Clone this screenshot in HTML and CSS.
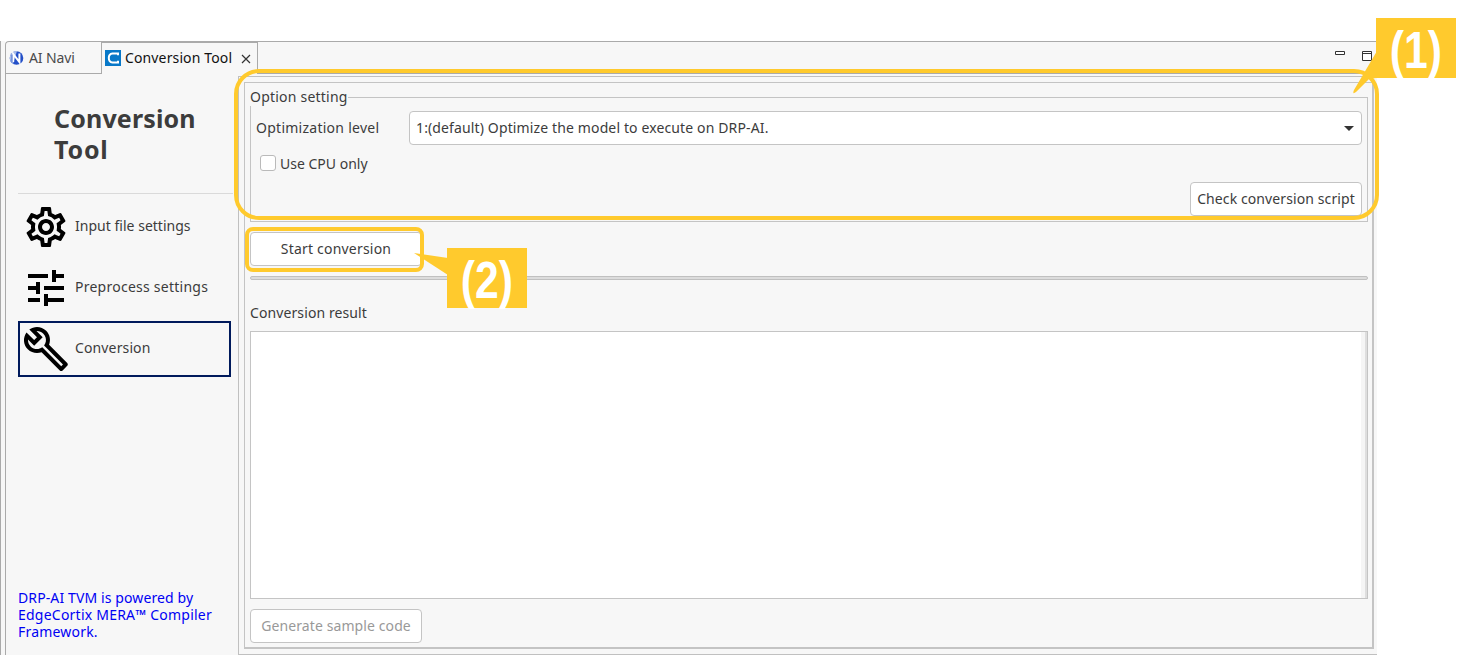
FILE: index.html
```
<!DOCTYPE html>
<html lang="en">
<head>
<meta charset="utf-8">
<title>Conversion Tool</title>
<link rel="stylesheet" href="styles.css">
</head>
<body>
<div class="screen">
  <div class="gutter"></div>
  <div class="window">
    <div class="tabs">
      <div class="tab tab-navi">
        <svg class="tab-icon" width="16" height="16" viewBox="0 0 16 16"><circle cx="7.500" cy="8" r="6.800" fill="#2450c8"/><path d="M1 6a7 7 0 0 1 7-5L4 14Q0 11 1 6z" fill="#a9bdea"/><path d="M4.200 12V4l6.200 8V3.500" fill="none" stroke="#fff" stroke-width="2"/><path d="M3 12.500V4.500" stroke="#2450c8" stroke-width=".8"/></svg>
        <span class="t-navi">AI Navi</span>
      </div>
      <div class="tab tab-active">
        <svg class="tab-icon" width="16" height="16" viewBox="0 0 16 16"><rect width="16" height="16" fill="#0878c8"/><path d="M13 5.200V3.500H7.500Q3.800 4 3.800 8T7.500 12.500H13V10.800" fill="none" stroke="#fff" stroke-width="2"/></svg>
        <span class="t-tool">Conversion Tool</span>
        <svg class="close" width="10" height="10" viewBox="0 0 10 10"><path d="M1 1l8 8M9 1l-8 8" stroke="#333" stroke-width="1.200"/></svg>
      </div>
      <div class="tab-rest">
        <svg width="37" height="12" viewBox="0 0 37 12" fill="#fff" stroke="#333"><path d="M.5 1.500h9v3h-9z"/><path d="M27.500 1.500h9v9h-9zM27.500 3.500h9"/></svg>
      </div>
    </div>
    <div class="body">
      <div class="side">
        <h1 class="title"><span class="t-h1">Conversion</span><br><span class="t-h2">Tool</span></h1>
        <div class="rule"></div>
        <div class="nav">
          <div class="item"><svg class="item-icon" width="48" height="48" viewBox="0 0 24 24"><path d="M19.430 12.980c.040-.320.070-.640.070-.980 0-.340-.030-.660-.070-.980l2.110-1.650c.190-.150.240-.420.120-.640l-2-3.460c-.090-.160-.260-.250-.440-.250-.060 0-.120.010-.170.030l-2.490 1c-.520-.400-1.080-.730-1.690-.980l-.380-2.650C14.460 2.180 14.250 2 14 2h-4c-.250 0-.460.180-.490.420l-.380 2.650c-.610.250-1.170.590-1.690.980l-2.490-1c-.060-.020-.120-.030-.180-.030-.170 0-.340.090-.430.250l-2 3.460c-.130.220-.070.490.120.640l2.110 1.650c-.040.320-.070.650-.070.980 0 .330.030.660.070.980l-2.110 1.650c-.190.150-.240.420-.120.640l2 3.460c.090.160.260.250.440.250.060 0 .120-.010.170-.030l2.490-1c.520.400 1.080.730 1.690.980l.380 2.650c.030.240.240.420.490.420h4c.250 0 .460-.180.490-.420l.380-2.650c.610-.250 1.170-.590 1.690-.980l2.490 1c.060.020.120.030.180.030.170 0 .340-.090.430-.250l2-3.460c.120-.220.070-.490-.120-.640l-2.110-1.650zm-1.980-1.710c.040.310.050.520.050.730 0 .210-.020.430-.050.730l-.140 1.130.890.700 1.080.840-.700 1.210-1.270-.510-1.040-.420-.900.680c-.430.320-.840.560-1.250.730l-1.060.430-.160 1.130-.200 1.350h-1.400l-.190-1.350-.160-1.130-1.060-.430c-.430-.180-.830-.410-1.230-.710l-.910-.700-1.060.430-1.270.510-.700-1.210 1.080-.840.890-.700-.140-1.130c-.030-.310-.050-.540-.050-.740s.020-.430.050-.730l.140-1.130-.890-.700-1.080-.840.700-1.210 1.270.510 1.040.420.900-.680c.430-.320.840-.560 1.250-.730l1.060-.430.160-1.130.200-1.350h1.390l.190 1.350.160 1.130 1.060.430c.430.180.830.410 1.230.710l.910.700 1.060-.430 1.270-.510.700 1.210-1.070.850-.890.700.140 1.130zM12 8c-2.210 0-4 1.790-4 4s1.790 4 4 4 4-1.790 4-4-1.790-4-4-4zm0 6c-1.100 0-2-.900-2-2s.900-2 2-2 2 .900 2 2-.900 2-2 2z"/></svg><span class="t-input">Input file settings</span></div>
          <div class="item"><svg class="item-icon" width="48" height="48" viewBox="0 0 24 24"><path d="M3 17v2h6v-2H3zM3 5v2h10V5H3zm10 16v-2h8v-2h-8v-2h-2v6h2zM7 9v2H3v2h4v2h2V9H7zm14 4v-2H11v2h10zm-6-4h2V7h4V5h-4V3h-2v6z"/></svg><span class="t-pre">Preprocess settings</span></div>
          <div class="item item-selected"><svg class="item-icon" width="48" height="48" viewBox="0 0 24 24"><path d="M22.610 18.990l-9.080-9.080c.930-2.340.450-5.100-1.440-7C9.790.610 6.210.400 3.660 2.260L7.500 6.110 6.080 7.520 2.250 3.690C.390 6.230.600 9.820 2.900 12.110c1.860 1.860 4.570 2.350 6.890 1.480l9.110 9.110c.390.390 1.020.390 1.410 0l2.300-2.300c.400-.380.400-1.010 0-1.410zm-3 1.600l-9.460-9.460c-.610.450-1.290.720-2 .820-1.360.200-2.790-.210-3.830-1.250C3.370 9.760 2.930 8.500 3 7.260l3.090 3.090 4.240-4.240-3.090-3.090c1.240-.070 2.490.370 3.440 1.310 1.080 1.080 1.490 2.570 1.240 3.960-.120.710-.420 1.370-.880 1.960l9.450 9.450-.880.890z"/></svg><span class="t-conv">Conversion</span></div>
        </div>
        <div class="credit"><span class="t-c1">DRP-AI TVM is powered by</span><br><span class="t-c2">EdgeCortix MERA™ Compiler</span><br><span class="t-c3">Framework.</span></div>
      </div>
      <div class="main">
        <div class="panel">
          <fieldset class="group">
            <legend><span class="t-opt">Option setting</span></legend>
            <div class="row">
              <span class="row-label"><span class="t-lvl">Optimization level</span></span>
              <div class="combo"><span class="t-def">1:(default) Optimize the model to execute on DRP-AI.</span><i class="arrow"></i></div>
            </div>
            <label class="check"><i class="box"></i><span class="t-cpu">Use CPU only</span></label>
            <div class="right"><div class="btn"><span class="t-chk">Check conversion script</span></div></div>
          </fieldset>
          <div class="btn btn-start"><span class="t-start">Start conversion</span></div>
          <div class="bar"></div>
          <div class="caption"><span class="t-res">Conversion result</span></div>
          <div class="output"></div>
          <div class="btn btn-off"><span class="t-gen">Generate sample code</span></div>
        </div>
      </div>
    </div>
  </div>
  <div class="mark mark-1"></div>
  <div class="mark mark-2"></div>
  <svg class="tails" width="1475" height="655" fill="#ffca2d"><path d="M1377 51V78H1376L1369 79L1356 92Q1352 95 1354 90z"/><path d="M414 253L448 258V275z"/></svg>
  <div class="callout callout-1"><span>(1)</span></div>
  <div class="callout callout-2"><span>(2)</span></div>
</div>
</body>
</html>
```
FILE: styles.css
```
* { box-sizing: border-box; }
body { margin: 0; background: #fff; font: 14px/18px "Noto Sans", "Open Sans", sans-serif; color: #3c3c3c; }
span { white-space: nowrap; }
svg { display: block; flex: none; }
.screen { position: relative; width: 1475px; height: 655px; overflow: hidden; display: flex; padding-top: 41px; }
.gutter { width: 5px; background: #f7f7f7; border-left: 1px solid #aaa; }
.window { width: 1372px; background: #f7f7f7; border-left: 1px solid #aaa; border-top: 1px solid #aaa; border-top-left-radius: 4px; display: flex; flex-direction: column; }
.tabs { display: flex; height: 32px; }
.tab { display: flex; align-items: center; }
.tab-navi { width: 95px; padding: 0 0 0 3px; gap: 4px; border-bottom: 1px solid #aaa; color: #4a4a4a; }
.tab-active { width: 157px; padding: 0 0 2px 3px; gap: 4px; border: solid #aaa; border-width: 2px 1px 0; margin-top: -1px; color: #111; }
.tab-active .close { margin-left: auto; margin-right: 6px; margin-top: 2px; }
.tab-rest { flex: 1; border-bottom: 1px solid #aaa; display: flex; justify-content: flex-end; padding: 8px 5px 0 0; }
.body { flex: 1; display: flex; }
.side { width: 232px; padding-left: 12px; display: flex; flex-direction: column; }
.title { margin: 29px 0 0 36px; font-size: 25px; line-height: 31px; font-weight: 700; height: 62px; }
.rule { height: 1px; margin: 28px 5px 5px 0; background: #dadada; }
.nav { display: flex; flex-direction: column; gap: 5px; }
.item { width: 213px; height: 56px; display: flex; align-items: center; gap: 5px; padding-left: 2px; border: 2px solid transparent; }
.item > span { margin-top: -2px; }
.item-selected { border-color: #001a5c; }
.credit { margin-top: auto; margin-bottom: 15px; line-height: 17px; color: #0000f4; }
.main { width: 1139px; margin-top: 2px; border: solid #c0c0c0; border-width: 1px 0 1px 1px; padding: 5px 3px 5px 5px; }
.panel { height: 567px; border: 1px solid #c4c4c4; border-right-width: 2px; border-bottom-width: 2px; padding: 5px 4px 0 5px; display: flex; flex-direction: column; align-items: flex-start; }
.group { width: 1118px; height: 134px; margin: 0; padding: 0 5px 5px; border: 1px solid #c4c4c4; display: block; }
.group legend { padding: 0; margin-left: -6px; height: 18px; }
.row { display: flex; align-items: center; margin-top: 5px; }
.row-label { width: 153px; }
.combo { flex: 1; height: 34px; background: #fff; border: 1px solid #c4c4c4; border-radius: 4px; display: flex; align-items: center; justify-content: space-between; padding: 0 7px 0 6px; }
.arrow { border: 5px solid transparent; border-top: 5px solid #333; border-bottom: 0; }
.check { display: flex; align-items: center; gap: 4px; margin: 9px 0 0 4px; height: 20px; }
.box { width: 16px; height: 16px; margin-top: -2px; background: #fff; border: 1px solid #bababa; border-radius: 3px; }
.right { display: flex; justify-content: flex-end; margin-top: 8px; }
.btn { width: 172px; height: 34px; background: #fff; border: 1px solid #c4c4c4; border-radius: 4px; display: flex; align-items: center; justify-content: center; }
.btn-start { margin-top: 10px; }
.bar { width: 1118px; height: 4px; margin-top: 10px; background: #dcdcdc; border: 1px solid #c0c0c0; border-radius: 2px; }
.caption { margin-top: 24px; height: 18px; }
.output { width: 1118px; height: 268px; margin-top: 9px; background: #fff; border: 1px solid #c4c4c4; box-shadow: inset -2px 0 #dedede, inset -6px 0 #f5f5f5; }
.btn-off { margin-top: 10px; color: #999; }
.mark { position: absolute; border: 4px solid #ffca2d; }
.mark-1 { left: 234px; top: 69px; width: 1145px; height: 151px; border-radius: 25px; }
.mark-2 { left: 245px; top: 227px; width: 179px; height: 45px; border-radius: 8px; }
.tails { position: absolute; left: 0; top: 0; }
.callout { position: absolute; width: 80px; height: 60px; background: #ffca2d; color: #fff; font: 700 52px/64px "Liberation Sans", sans-serif; display: flex; justify-content: center; }
.callout span { transform: scaleX(.82); }
.callout-1 { left: 1376px; top: 18px; }
.callout-2 { left: 447px; top: 248px; }
.t-navi { letter-spacing: -.1px; }
.t-tool { letter-spacing: .13px; }
.t-h1 { letter-spacing: .15px; }
.t-h2 { letter-spacing: .8px; }
.t-input { letter-spacing: .02px; }
.t-pre { letter-spacing: .25px; }
.t-conv { letter-spacing: .13px; }
.t-c1 { letter-spacing: .11px; }
.t-c2 { letter-spacing: .23px; }
.t-c3 { letter-spacing: .2px; }
.t-opt { letter-spacing: .22px; }
.t-lvl { letter-spacing: .26px; }
.t-def { letter-spacing: .13px; }
.t-chk { letter-spacing: .1px; }
.t-start { letter-spacing: .2px; }
.t-res { letter-spacing: .1px; }
.t-gen { letter-spacing: .1px; }
```
